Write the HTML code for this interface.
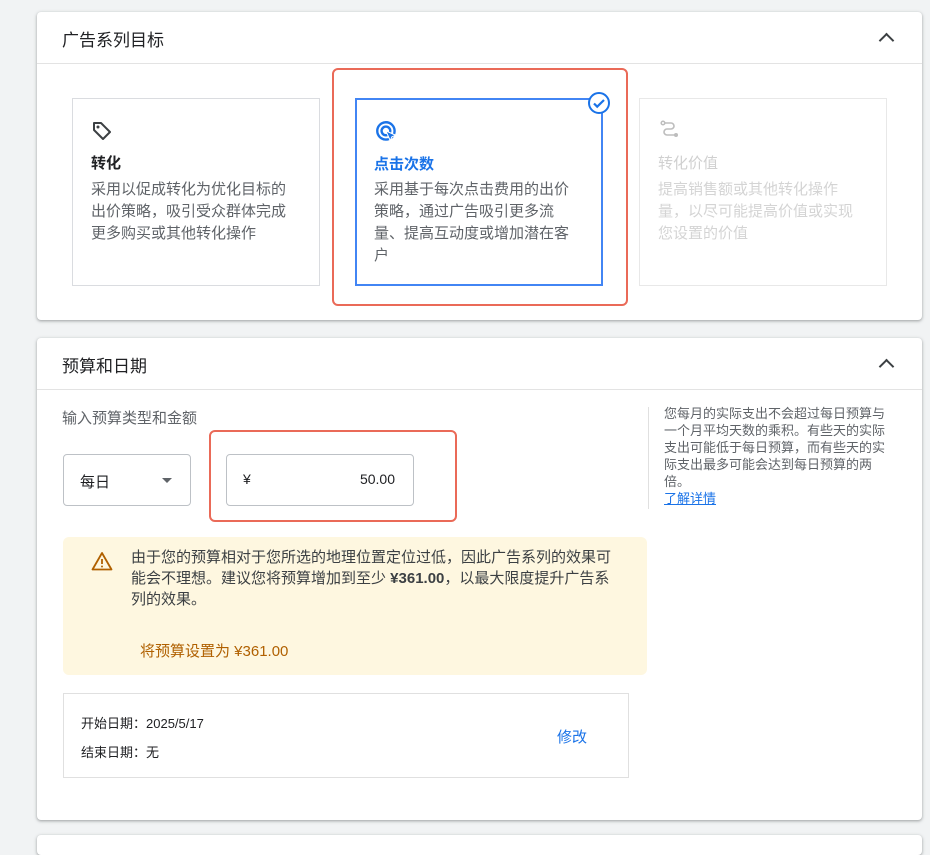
<!DOCTYPE html>
<html><head><meta charset="utf-8"><style>
*{box-sizing:border-box;margin:0;padding:0}
body{width:930px;height:840px;background:#f1f3f4;font-family:"Liberation Sans","Noto Sans CJK SC",sans-serif;position:relative;overflow:hidden;color:#3c4043}
.abs{position:absolute}
.card{position:absolute;background:#fff;border-radius:4px;box-shadow:0 1px 2px rgba(60,64,67,.3),0 1px 3px 1px rgba(60,64,67,.15)}
.hdr{position:absolute;left:0;right:0;top:0;border-bottom:1px solid #e3e3e3}
.title{position:absolute;left:25px;font-size:17px;color:#202124}
.chev{position:absolute;right:30px;width:11px;height:11px;border-left:2px solid #3c4043;border-top:2px solid #3c4043;transform:rotate(45deg)}
.opt{position:absolute;width:248px;height:188px;border:1px solid #dadce0;background:#fff}
.opt .h{position:absolute;left:18px;top:53px;font-size:15px;font-weight:bold}
.opt .d{position:absolute;left:18px;top:80px;width:200px;font-size:15px;line-height:22px;color:#5f6368}
</style></head><body>
<div class="card" style="left:37px;top:12px;width:885px;height:308px">
 <div class="hdr" style="height:52px"></div>
 <div class="title" style="top:14px">广告系列目标</div>
 <div class="chev" style="top:23px"></div>
</div>
<div class="opt" style="left:72px;top:98px">
 <svg class="abs" style="left:18px;top:20px" width="24" height="24" viewBox="0 0 24 24"><path d="M3 4v7l9 9 7-7-9-9H3z" fill="none" stroke="#3c4043" stroke-width="2" stroke-linejoin="round"/><circle cx="7" cy="8" r="1.5" fill="#3c4043"/></svg>
 <div class="h" style="color:#202124">转化</div>
 <div class="d">采用以促成转化为优化目标的出价策略，吸引受众群体完成更多购买或其他转化操作</div>
</div>
<div class="opt" style="left:355px;top:98px;border:2px solid #4285f4">
 <svg class="abs" style="left:17px;top:19px" width="26" height="26" viewBox="0 0 24 24"><circle cx="11" cy="11" r="8" fill="none" stroke="#1a73e8" stroke-width="2.2"/><circle cx="11" cy="11" r="4" fill="none" stroke="#1a73e8" stroke-width="2.2"/><path d="M11 11l9 4-3.5 1.5L15 20z" fill="#1a73e8" stroke="#fff" stroke-width="1"/></svg>
 <div class="h" style="color:#1a73e8;left:17px">点击次数</div>
 <div class="d" style="left:17px;top:79px;color:#5f6368">采用基于每次点击费用的出价策略，通过广告吸引更多流量、提高互动度或增加潜在客户</div>
</div>
<svg class="abs" style="left:587px;top:91px" width="24" height="24" viewBox="0 0 24 24"><circle cx="12" cy="12" r="10" fill="#fff" stroke="#1a73e8" stroke-width="2"/><path d="M7 12.5l3.2 3.2L17 9" fill="none" stroke="#1a73e8" stroke-width="2.2"/></svg>
<div class="opt" style="left:639px;top:98px;border-color:#e8e8e8">
 <svg class="abs" style="left:18px;top:20px" width="24" height="24" viewBox="0 0 24 24"><circle cx="5" cy="4" r="1.8" fill="none" stroke="#bdbdbd" stroke-width="1.5"/><path d="M7 4h6a3 3 0 010 6H9a3 3 0 000 6h8" fill="none" stroke="#bdbdbd" stroke-width="1.6"/><circle cx="18" cy="16" r="2" fill="#bdbdbd"/></svg>
 <div class="h" style="color:#d0d0d0;font-weight:normal">转化价值</div>
 <div class="d" style="color:#d4d4d4">提高销售额或其他转化操作量，以尽可能提高价值或实现您设置的价值</div>
</div>
<div class="abs" style="left:332px;top:68px;width:296px;height:238px;border:2px solid #ea6a58;border-radius:6px"></div>

<div class="card" style="left:37px;top:338px;width:885px;height:482px">
 <div class="hdr" style="height:52px"></div>
 <div class="title" style="top:14px">预算和日期</div>
 <div class="chev" style="top:23px"></div>
</div>
<div class="abs" style="left:62px;top:407px;font-size:15px;color:#5f6368">输入预算类型和金额</div>
<div class="abs" style="left:63px;top:454px;width:128px;height:52px;border:1px solid #bdc1c6;border-radius:4px;background:#fff">
 <span class="abs" style="left:16px;top:16px;font-size:15px;color:#202124">每日</span>
 <span class="abs" style="left:98px;top:23px;border-left:5px solid transparent;border-right:5px solid transparent;border-top:5px solid #5f6368"></span>
</div>
<div class="abs" style="left:226px;top:454px;width:188px;height:52px;border:1px solid #bdc1c6;border-radius:4px;background:#fff">
 <span class="abs" style="left:16px;top:16px;font-size:14px;color:#202124">¥</span>
 <span class="abs" style="right:18px;top:16px;font-size:14px;color:#202124">50.00</span>
</div>
<div class="abs" style="left:209px;top:430px;width:248px;height:92px;border:2px solid #ea6a58;border-radius:6px"></div>
<div class="abs" style="left:648px;top:407px;width:1px;height:102px;background:#e0e0e0"></div>
<div class="abs" style="left:664px;top:405px;width:228px;font-size:13px;line-height:17px;color:#5f6368">您每月的实际支出不会超过每日预算与一个月平均天数的乘积。有些天的实际支出可能低于每日预算，而有些天的实际支出最多可能会达到每日预算的两倍。<br><span style="color:#1a73e8;text-decoration:underline">了解详情</span></div>
<div class="abs" style="left:63px;top:537px;width:584px;height:138px;background:#fef7e0;border-radius:6px">
 <svg class="abs" style="left:28px;top:14px" width="22" height="20" viewBox="0 0 22 20"><path d="M11 2L1.5 18.5h19z" fill="none" stroke="#b06000" stroke-width="1.8" stroke-linejoin="round"/><path d="M11 8v5" stroke="#b06000" stroke-width="1.8"/><circle cx="11" cy="15.5" r="1" fill="#b06000"/></svg>
 <div class="abs" style="left:68px;top:10px;width:492px;font-size:15px;line-height:21px;color:#3c4043">由于您的预算相对于您所选的地理位置定位过低，因此广告系列的效果可能会不理想。建议您将预算增加到至少 <b>¥361.00</b>，以最大限度提升广告系列的效果。</div>
 <div class="abs" style="left:77px;top:103px;font-size:15px;color:#b06000">将预算设置为 ¥361.00</div>
</div>
<div class="abs" style="left:63px;top:693px;width:566px;height:85px;border:1px solid #e0e0e0;background:#fff">
 <div class="abs" style="left:17px;top:19px;font-size:13px;color:#202124">开始日期：2025/5/17</div>
 <div class="abs" style="left:17px;top:48px;font-size:13px;color:#202124">结束日期：无</div>
 <div class="abs" style="left:493px;top:32px;font-size:15px;color:#1a73e8">修改</div>
</div>
<div class="card" style="left:37px;top:835px;width:885px;height:20px"></div>
</body></html>
